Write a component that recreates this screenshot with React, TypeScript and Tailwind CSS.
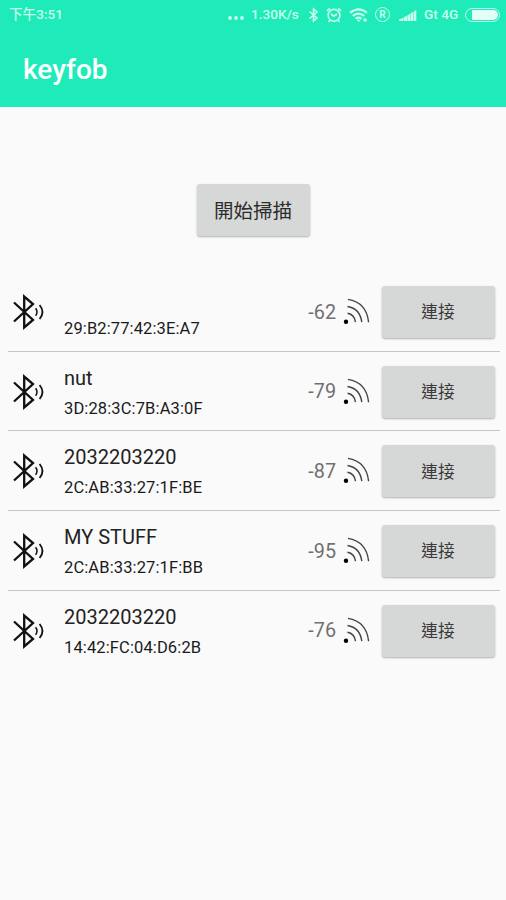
interface Device {
  name: string;
  address: string;
  rssi: number;
}

const devices: Device[] = [
  { name: '', address: '29:B2:77:42:3E:A7', rssi: -62 },
  { name: 'nut', address: '3D:28:3C:7B:A3:0F', rssi: -79 },
  { name: '2032203220', address: '2C:AB:33:27:1F:BE', rssi: -87 },
  { name: 'MY STUFF', address: '2C:AB:33:27:1F:BB', rssi: -95 },
  { name: '2032203220', address: '14:42:FC:04:D6:2B', rssi: -76 },
];

function BluetoothIcon() {
  return (
    <svg width="34" height="36" viewBox="0 0 34 36" fill="none" stroke="#111" strokeWidth="2.3">
      <path d="M2 8.5 21 26 12.2 33.5V2.5L21 10 2 27.5" />
      <path d="M23.6 14.2q2.8 3.8 0 7.6" strokeWidth="1.5" />
      <path d="M27.6 11q5.8 7 0 14" strokeWidth="1.8" />
    </svg>
  );
}

function SignalIcon() {
  return (
    <svg width="28" height="28" viewBox="0 0 28 28" fill="none" stroke="#444" strokeWidth="1.4">
      <circle cx="4" cy="23.8" r="2.2" fill="#000" stroke="none" />
      <path d="M5.5 15.3q7 1.2 8 8.9" />
      <path d="M5.5 8.5q12.5 2 14.3 15.7" />
      <path d="M6 1.4q18.5 3.1 20.6 22.8" />
    </svg>
  );
}

function StatusBar() {
  return (
    <div className="flex h-[29px] items-center pl-[9px] text-[13.6px] font-medium text-[#c9fdec]">
      <span className="w-[218px] shrink-0">下午3:51</span>
      <svg className="mt-[7px] shrink-0" width="18" height="4" fill="currentColor">
        <circle cx="3" cy="2" r="1.9" />
        <circle cx="9" cy="2" r="1.9" />
        <circle cx="15" cy="2" r="1.9" />
      </svg>
      <span className="ml-[6px] w-[50px] shrink-0 whitespace-nowrap">1.30K/s</span>
      <svg className="ml-[7px] shrink-0" width="12" height="16" fill="none" stroke="currentColor" strokeWidth="1.6">
        <path d="M1.5 4.5 9 11 5.5 14V2L9 5 1.5 11.5" />
      </svg>
      <svg className="ml-[6px] shrink-0" width="16" height="16" fill="none" stroke="currentColor" strokeWidth="1.6">
        <circle cx="8" cy="8.3" r="5.9" />
        <path d="m5 7 3 2.2L11 7M1 3.8 3.8 1.3M12.2 1.3 15 3.8M4 13l-1.5 2M12 13l1.5 2" />
      </svg>
      <svg className="ml-[7px] shrink-0" width="20" height="16" fill="none" stroke="currentColor" strokeWidth="2.1">
        <path d="M1 5.8q9-7 17 0M3.8 8.9q5.7-4.7 11.4 0M6.5 11.8q3-2.4 6 0" />
        <path d="m7.5 12.7 2.1 2.3 2.1-2.3z" fill="currentColor" stroke="none" />
        <circle cx="16" cy="13" r="1.8" fill="currentColor" stroke="none" />
      </svg>
      <span className="ml-[6px] flex size-[15px] shrink-0 items-center justify-center rounded-full border-[1.5px] border-[#c9fdec] pt-px text-[10px] leading-none font-bold">
        R
      </span>
      <svg className="ml-[8px] shrink-0" width="19" height="14" fill="currentColor">
        <path d="M1 13v-1.5L5 10v3zM5.4 13V9.5L9 7.8V13zM9.4 13V7.3l3.2-1.7V13zM13 13V5l2.4-1.1V13zM15.9 13V3.3L18.3 2v11z" />
      </svg>
      <span className="ml-[7px] w-[36px] shrink-0 whitespace-nowrap">Gt 4G</span>
      <span className="ml-[5px] flex h-[14px] w-[35px] shrink-0 rounded-full border-[1.5px] border-[#bcfce8] p-[1px] pl-[6px]">
        <span className="w-full rounded-r-full bg-[#e2fff6]" />
      </span>
    </div>
  );
}

function DeviceRow({ device }: { device: Device }) {
  return (
    <li className="flex h-[79.7px] items-center border-b-[1.5px] border-[#c6c6c6] pt-px pr-[5px] pl-1 last:border-transparent">
      <BluetoothIcon />
      <div className="ml-[18px] flex w-[236px] flex-col pt-[4px]">
        <span className="h-[30px] text-[20px] leading-[28px] text-[#222]">{device.name}</span>
        <span className="text-[16.5px] leading-[30px] tracking-[0.12px] text-[#1a1a1a]">{device.address}</span>
      </div>
      <span className="w-[36px] pt-px text-right text-[19.8px] whitespace-nowrap text-[#707070]">{device.rssi}</span>
      <span className="ml-[6px]">
        <SignalIcon />
      </span>
      <button className="ml-auto h-[52px] w-[113px] rounded-[3px] bg-[#d6d8d7] pt-[2px] pr-px text-[16.7px] text-[#3a3a3a] shadow-[0_1px_2px_rgba(0,0,0,0.3)]">
        連接
      </button>
    </li>
  );
}

export default function App() {
  return (
    <div className="h-[900px] w-[506px] overflow-hidden bg-[#fafafa] font-['Roboto','Noto_Sans_CJK_TC',sans-serif]">
      <header className="h-[107px] bg-[#1eebb9]">
        <StatusBar />
        <h1 className="pt-[21px] pl-[23px] text-[28px] leading-[40px] font-medium text-white">keyfob</h1>
      </header>
      <main className="flex flex-col items-center pt-[77px] pr-[6px] pl-2">
        <button className="mr-[2px] h-[52px] w-[113px] rounded-[3px] bg-[#d6d8d7] pt-[3px] text-[19.5px] text-[#2c2c2c] shadow-[0_1px_2px_rgba(0,0,0,0.3)]">
          開始掃描
        </button>
        <ul className="mt-[36px] w-full">
          {devices.map((device) => (
            <DeviceRow key={device.address} device={device} />
          ))}
        </ul>
      </main>
    </div>
  );
}
